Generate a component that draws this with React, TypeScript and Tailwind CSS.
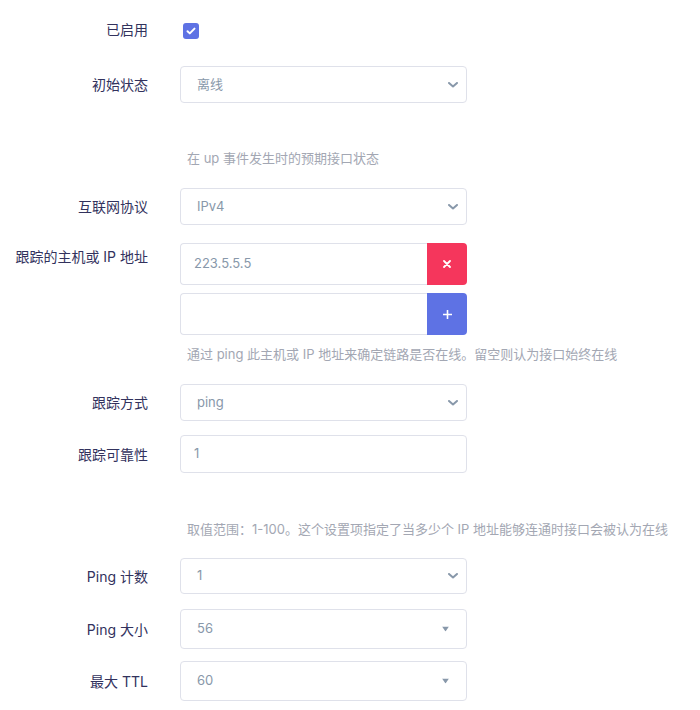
import type { ReactNode } from 'react'

const FONT = "font-['Inter','Noto_Sans_CJK_SC',sans-serif]"

function Label({ children, className = '' }: { children: ReactNode; className?: string }) {
  return (
    <div className={`w-[148px] shrink-0 flex justify-end text-right text-[14px] text-[#32325d] ${className}`}>
      {children}
    </div>
  )
}

function Row({ label, children, className = '', labelClass = 'items-center' }: { label?: string; children: ReactNode; className?: string; labelClass?: string }) {
  return (
    <div className={`flex items-start gap-[32px] ${className}`}>
      <Label className={labelClass}>{label}</Label>
      <div className="w-[287px]">{children}</div>
    </div>
  )
}

function Chevron() {
  return (
    <svg width="10" height="6" viewBox="0 0 10 6" className="absolute right-[4px] top-1/2 -translate-y-1/2">
      <path d="M1 1l4 3.5L9 1" fill="none" stroke="#8898aa" strokeWidth="2" strokeLinecap="round" strokeLinejoin="round" />
    </svg>
  )
}

function Select({ value, h = 'h-[37px]' }: { value: string; h?: string }) {
  return (
    <div className={`relative ${h} rounded-[4px] border border-[#dfe1ea] bg-white flex items-center pl-[16px] pr-[8px]`}>
      <span className="text-[13px] text-[#8898aa]">{value}</span>
      <div className="absolute right-[4px] top-0 bottom-0 w-[12px]">
        <Chevron />
      </div>
    </div>
  )
}

function Combo({ value }: { value: string }) {
  return (
    <div className="relative h-[40px] rounded-[4px] border border-[#dfe1ea] bg-white flex items-center pl-[16px]">
      <span className="text-[13px] text-[#8898aa]">{value}</span>
      <svg width="7" height="5" viewBox="0 0 7 5" className="absolute left-[261px] top-1/2 -translate-y-1/2">
        <path d="M0 0h7L3.5 5z" fill="#8898aa" />
      </svg>
    </div>
  )
}

function Help({ children, className = '' }: { children: ReactNode; className?: string }) {
  return (
    <div className={`pl-[187px] h-[20px] leading-[20px] text-[13px] text-[#a3a7b3] whitespace-nowrap ${className}`}>
      {children}
    </div>
  )
}

function DynInput({ value, kind }: { value: string; kind: 'del' | 'add' }) {
  return (
    <div className="flex h-[42px]">
      <div className="flex-1 rounded-l-[4px] border border-r-0 border-[#dfe1ea] bg-white flex items-center pl-[13px] text-[13px] text-[#8898aa]">
        {value}
      </div>
      <div
        className={`w-[40px] rounded-r-[4px] flex items-center justify-center text-white font-bold ${
          kind === 'del' ? 'bg-[#f5365c]' : 'bg-[#5e72e4]'
        }`}
      >
        {kind === 'del' ? (
          <svg width="8" height="8" viewBox="0 0 8 8">
            <path d="M1 1l6 6M7 1L1 7" stroke="white" strokeWidth="1.8" strokeLinecap="round" />
          </svg>
        ) : (
          <svg width="9" height="9" viewBox="0 0 9 9">
            <path d="M4.5 0.5v8M0.5 4.5h8" stroke="white" strokeWidth="1.6" strokeLinecap="round" />
          </svg>
        )}
      </div>
    </div>
  )
}

export default function App() {
  return (
    <div className={`w-[700px] h-[710px] bg-white pt-[20px] overflow-hidden ${FONT}`}>
      {/* enabled */}
      <div className="flex items-center gap-[32px] h-[18px]">
        <Label>已启用</Label>
        <div className="pl-[3px] pt-[4px]">
          <div className="w-[16px] h-[16px] rounded-[3px] bg-[#5e72e4] flex items-center justify-center">
            <svg width="10" height="8" viewBox="0 0 10 8">
              <path d="M1.5 4.2l2.3 2.2L8.5 1.6" fill="none" stroke="white" strokeWidth="2" strokeLinecap="round" strokeLinejoin="round" />
            </svg>
          </div>
        </div>
      </div>

      <Row label="初始状态" className="mt-[28px]" labelClass="items-center h-[37px]">
        <Select value="离线" />
      </Row>
      <Help className="mt-[45px]">在 up 事件发生时的预期接口状态</Help>

      <Row label="互联网协议" className="mt-[20px]" labelClass="items-center h-[37px]">
        <Select value="IPv4" />
      </Row>

      <Row label="跟踪的主机或 IP 地址" className="mt-[18px]" labelClass="items-start pt-[4px] leading-[20px]">
        <div className="flex flex-col gap-[8px]">
          <DynInput value="223.5.5.5" kind="del" />
          <DynInput value="" kind="add" />
        </div>
      </Row>
      <Help className="mt-[9px]">通过 ping 此主机或 IP 地址来确定链路是否在线。留空则认为接口始终在线</Help>

      <Row label="跟踪方式" className="mt-[20px]" labelClass="items-center h-[37px]">
        <Select value="ping" />
      </Row>

      <Row label="跟踪可靠性" className="mt-[14px]" labelClass="items-center h-[38px]">
        <div className="h-[38px] rounded-[4px] border border-[#dfe1ea] bg-white flex items-center pl-[13px] text-[13px] text-[#8898aa]">
          1
        </div>
      </Row>
      <Help className="mt-[46px]">取值范围：1-100。这个设置项指定了当多少个 IP 地址能够连通时接口会被认为在线</Help>

      <Row label="Ping 计数" className="mt-[19px]" labelClass="items-center h-[36px]">
        <Select value="1" h="h-[36px]" />
      </Row>

      <Row label="Ping 大小" className="mt-[15px]" labelClass="items-center h-[40px]">
        <Combo value="56" />
      </Row>

      <Row label="最大 TTL" className="mt-[12px]" labelClass="items-center h-[40px]">
        <Combo value="60" />
      </Row>
    </div>
  )
}
